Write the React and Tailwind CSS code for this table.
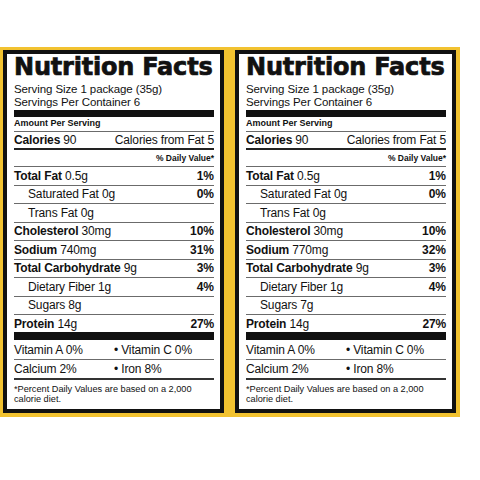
import React from 'react';

const base = {
  serving: 'Serving Size 1 package (35g)',
  perContainer: 'Servings Per Container 6',
  calories: '90',
  fromFat: '5',
};

const labels = [
  {
    sodium: '740mg',
    sodiumDv: '31%',
    sugars: '8g',
  },
  {
    sodium: '770mg',
    sodiumDv: '32%',
    sugars: '7g',
  },
];

const Row = ({ name, amount, dv, bold = true, indent = false, last = false }) => (
  <div
    className={`flex h-[18.5px] items-center justify-between text-[12px] ${
      last ? '' : 'border-b border-[#6b6b6b]'
    } ${indent ? 'pl-[14px]' : ''}`}
  >
    <span className="tracking-[-0.15px]">
      <span className={bold ? 'font-bold' : ''}>{name}</span> {amount}
    </span>
    {dv && <span className="font-bold">{dv}</span>}
  </div>
);

const Label = ({ data }) => (
  <div className="flex-1 border-4 border-[#111] bg-white pl-[7px] pr-[6px] text-[#111]">
    <div className="h-[26px] pt-[1px] font-['DejaVu_Sans',sans-serif] text-[24px] font-bold leading-[25px] tracking-[-0.2px] [-webkit-text-stroke:0.7px_#111]">
      Nutrition Facts
    </div>
    <div className="mt-[3px] text-[11.5px] leading-[13px] tracking-[-0.1px]">{base.serving}</div>
    <div className="text-[11.5px] leading-[13px] tracking-[-0.1px]">{base.perContainer}</div>
    <div className="mt-[1px] h-[7px] bg-[#111]" />
    <div className="flex h-[15px] items-center border-b border-[#6b6b6b] text-[9px] font-bold">
      Amount Per Serving
    </div>
    <div className="flex h-[18px] items-center justify-between border-b-2 border-[#222] text-[12px] tracking-[-0.15px]">
      <span>
        <span className="font-bold">Calories</span> {base.calories}
      </span>
      <span>Calories from Fat {base.fromFat}</span>
    </div>
    <div className="flex h-[17px] items-center justify-end border-b border-[#6b6b6b] text-[8.5px] font-bold">
      % Daily Value*
    </div>
    <Row name="Total Fat" amount="0.5g" dv="1%" />
    <Row name="Saturated Fat" amount=" 0g" dv="0%" bold={false} indent />
    <Row name="Trans Fat" amount="0g" bold={false} indent />
    <Row name="Cholesterol" amount="30mg" dv="10%" />
    <Row name="Sodium" amount={data.sodium} dv={data.sodiumDv} />
    <Row name="Total Carbohydrate" amount="9g" dv="3%" />
    <Row name="Dietary Fiber" amount=" 1g" dv="4%" bold={false} indent />
    <Row name="Sugars" amount={data.sugars} bold={false} indent />
    <div className="flex h-[17px] items-center justify-between text-[12px] tracking-[-0.15px]">
      <span>
        <span className="font-bold">Protein</span> 14g
      </span>
      <span className="font-bold">27%</span>
    </div>
    <div className="h-[8px] bg-[#111]" />
    <div className="grid h-[20px] grid-cols-2 items-center border-b border-[#6b6b6b] text-[12px] tracking-[-0.15px]">
      <span>Vitamin A 0%</span>
      <span>• Vitamin C 0%</span>
    </div>
    <div className="grid h-[20px] grid-cols-2 items-center border-b-2 border-[#333] text-[12px] tracking-[-0.15px]">
      <span>Calcium 2%</span>
      <span>• Iron 8%</span>
    </div>
    <div className="pt-[4px] pb-[5px] text-[9.2px] leading-[10px]">
      *Percent Daily Values are based on a 2,000 calorie diet.
    </div>
  </div>
);

export default function App() {
  return (
    <div className="h-[480px] w-[480px] bg-white pt-[47px] font-['Liberation_Sans',Arial,sans-serif]">
      <div className="flex w-[460px] gap-[11px] bg-[#f2c230] pt-[3px] pb-[4px] pl-[3px] pr-[4px]">
        {labels.map((data, i) => (
          <Label key={i} data={data} />
        ))}
      </div>
    </div>
  );
}
